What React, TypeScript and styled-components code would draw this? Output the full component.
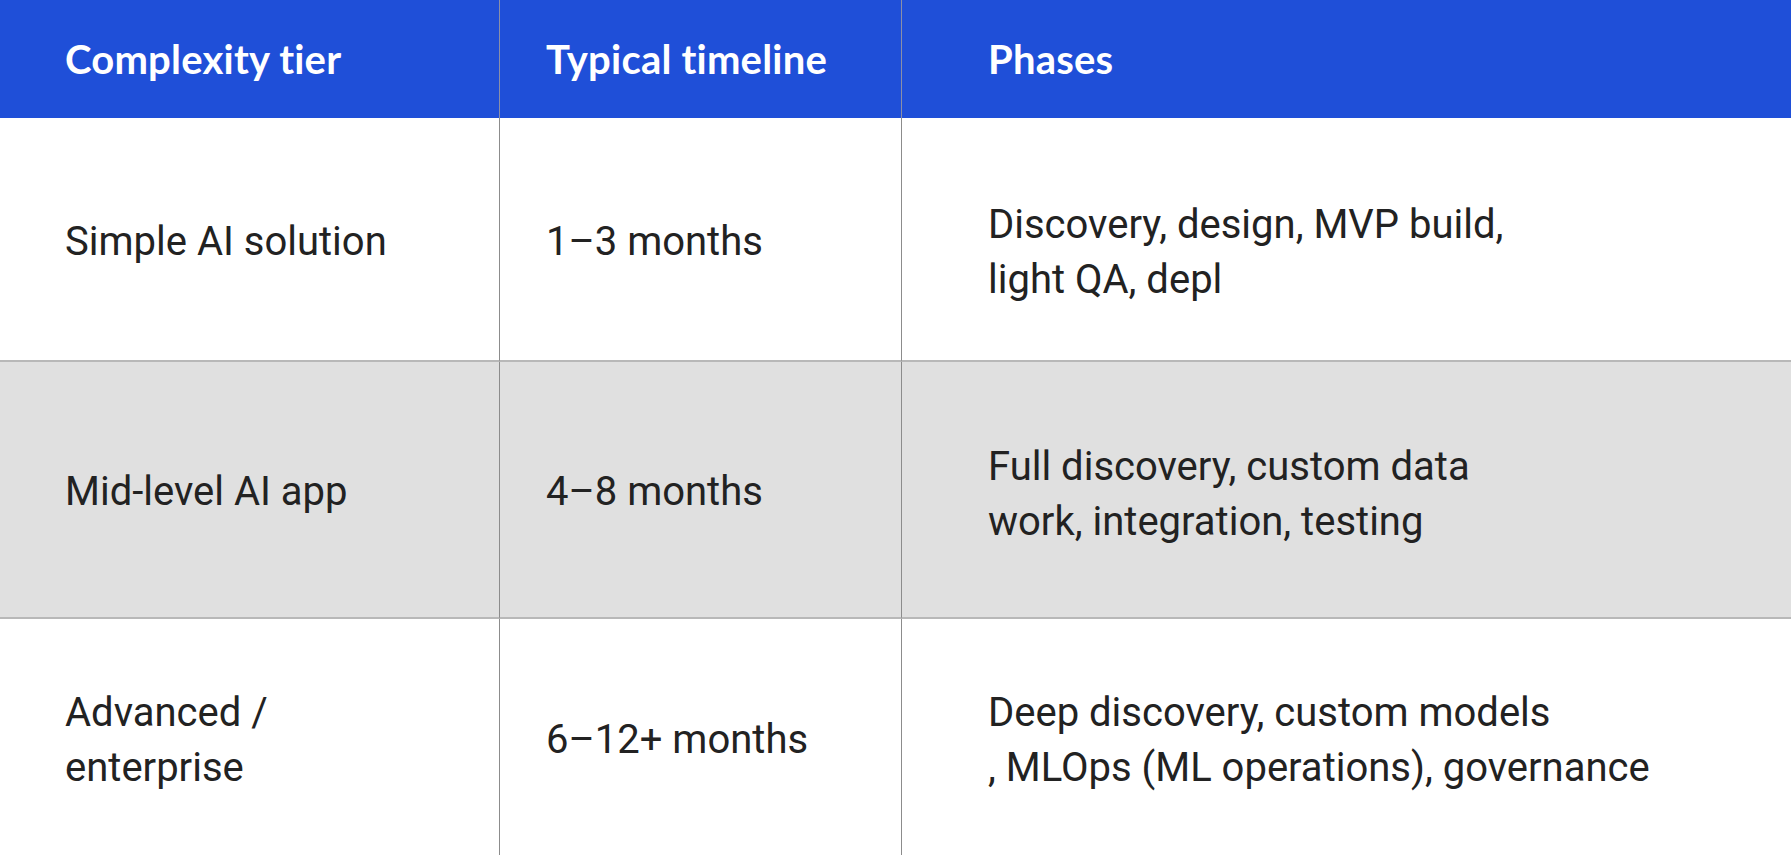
import React from "react";
import styled, { createGlobalStyle } from "styled-components";

const Global = createGlobalStyle`
  html, body { margin: 0; padding: 0; background: #ffffff; }
  body { overflow: hidden; }
`;

const Table = styled.div`
  display: grid;
  grid-template-columns: 500px 402px 1fr;
  grid-template-rows: 118px 244px 257px 241px;
  width: 1791px;
`;

const HeadCell = styled.div<{ $pad: number; $last?: boolean }>`
  background: #1f4fd8;
  color: #ffffff;
  font-family: "Lato", "Open Sans", sans-serif;
  font-weight: 700;
  font-size: 40px;
  letter-spacing: 0.2px;
  display: flex;
  align-items: center;
  padding-left: ${(p) => p.$pad}px;
  border-right: ${(p) => (p.$last ? "none" : "1px solid #8a8fa8")};
  box-sizing: border-box;
`;

const Cell = styled.div<{ $pad: number; $shift: number; $shade?: boolean; $last?: boolean; $bottom?: boolean }>`
  background: ${(p) => (p.$shade ? "#e0e0e0" : "#ffffff")};
  color: #222222;
  font-family: "Roboto", "Liberation Sans", sans-serif;
  font-weight: 400;
  font-size: 40px;
  line-height: 55px;
  display: flex;
  align-items: center;
  padding-left: ${(p) => p.$pad}px;
  padding-top: ${(p) => p.$shift}px;
  border-right: ${(p) => (p.$last ? "none" : "1px solid #8c8c8c")};
  border-bottom: ${(p) => (p.$bottom ? "2px solid #b8b8b8" : "none")};
  box-sizing: border-box;
`;

const pads = [65, 46, 86];

const rows: { cells: React.ReactNode[]; shift: number[] }[] = [
  {
    cells: ["Simple AI solution", "1–3 months", <>Discovery, design, MVP build,<br />light QA, depl</>],
    shift: [4, 4, 26],
  },
  {
    cells: ["Mid-level AI app", "4–8 months", <>Full discovery, custom data<br />work, integration, testing</>],
    shift: [4, 4, 8],
  },
  {
    cells: [<>Advanced /<br />enterprise</>, "6–12+ months", <>Deep discovery, custom models<br />, MLOps (ML operations), governance</>],
    shift: [0, 0, 0],
  },
];

export default function App() {
  return (
    <>
      <Global />
      <Table>
        {["Complexity tier", "Typical timeline", "Phases"].map((h, i) => (
          <HeadCell key={h} $pad={pads[i]} $last={i === 2}>{h}</HeadCell>
        ))}
        {rows.map((r, ri) =>
          r.cells.map((c, ci) => (
            <Cell
              key={`${ri}-${ci}`}
              $pad={pads[ci]}
              $shift={r.shift[ci]}
              $shade={ri === 1}
              $last={ci === 2}
              $bottom={ri < 2}
            >
              <span>{c}</span>
            </Cell>
          ))
        )}
      </Table>
    </>
  );
}
